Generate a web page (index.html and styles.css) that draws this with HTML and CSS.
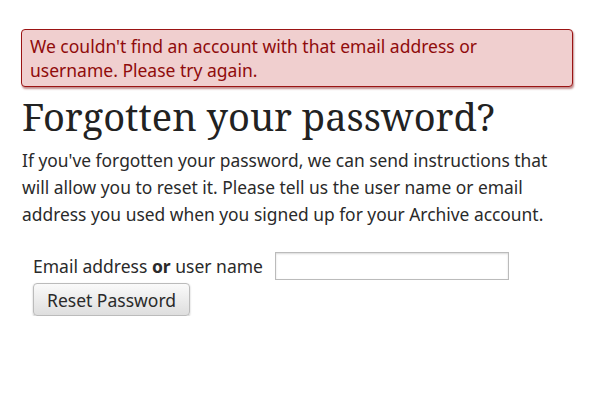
FILE: index.html
```html
<!DOCTYPE html>
<html lang="en">
<head>
    <meta charset="UTF-8">
    <meta name="viewport" content="width=device-width, initial-scale=1.0">
    <title>Forgotten your password?</title>
    <link rel="stylesheet" href="styles.css">
</head>
<body>
    <div class="main">
        <div class="flash error">We couldn't find an account with that email address or username. Please try again.</div>

        <h2 class="heading">Forgotten your password?</h2>
        <p class="intro">If you've forgotten your password, we can send instructions that will allow you to reset it. Please tell us the user name or email address you used when you signed up for your Archive account.</p>

        <form class="reset-form" autocomplete="off">
            <div class="field">
                <label for="reset_login">Email address <strong>or</strong> user name</label>
                <input type="text" id="reset_login" name="reset_login">
            </div>
            <button type="submit">Reset Password</button>
        </form>
    </div>
</body>
</html>
```

FILE: styles.css
```css
        body {
            margin: 0;
            padding: 0;
            background-color: #fff;
            color: #2a2a2a;
            font-family: "Noto Sans", sans-serif;
        }
        .main {
            padding: 29px 20px 0 21px;
        }
        .flash {
            font-size: 17.5px;
            line-height: 24px;
            padding: 4px 60px 4px 8px;
            border-radius: 4px;
        }
        .flash.error {
            background-color: #f0cfcf;
            color: #8f0b0b;
            border: 1px solid #9b1414;
            box-shadow: 1px 2px 2px rgba(120, 0, 0, 0.45);
        }
        .heading {
            font-family: "Noto Serif", "DejaVu Serif", serif;
            font-weight: normal;
            font-size: 38px;
            line-height: 44px;
            margin: 7px 0 0 1px;
            color: #222;
        }
        .intro {
            font-size: 17.4px;
            line-height: 27px;
            margin: 9px 0 0 1px;
        }
        .reset-form {
            margin: 24px 0 0 12px;
        }
        .field {
            display: flex;
            align-items: center;
            gap: 12px;
        }
        .field label {
            font-size: 17.5px;
        }
        .field input {
            width: 234px;
            height: 28px;
            box-sizing: border-box;
            padding: 0 2px;
            border: 1px solid #bbb;
            box-shadow: inset 0 1px 2px rgba(0, 0, 0, 0.15);
        }
        button[type="submit"] {
            margin-top: 3px;
            font-family: "Noto Sans", sans-serif;
            font-size: 17.5px;
            color: #2a2a2a;
            padding: 4px 13px;
            height: 33px;
            border: 1px solid #bbb;
            border-radius: 4px;
            background: linear-gradient(#fafafa, #dedede);
            box-shadow: 0 1px 2px rgba(0, 0, 0, 0.25);
        }
```
